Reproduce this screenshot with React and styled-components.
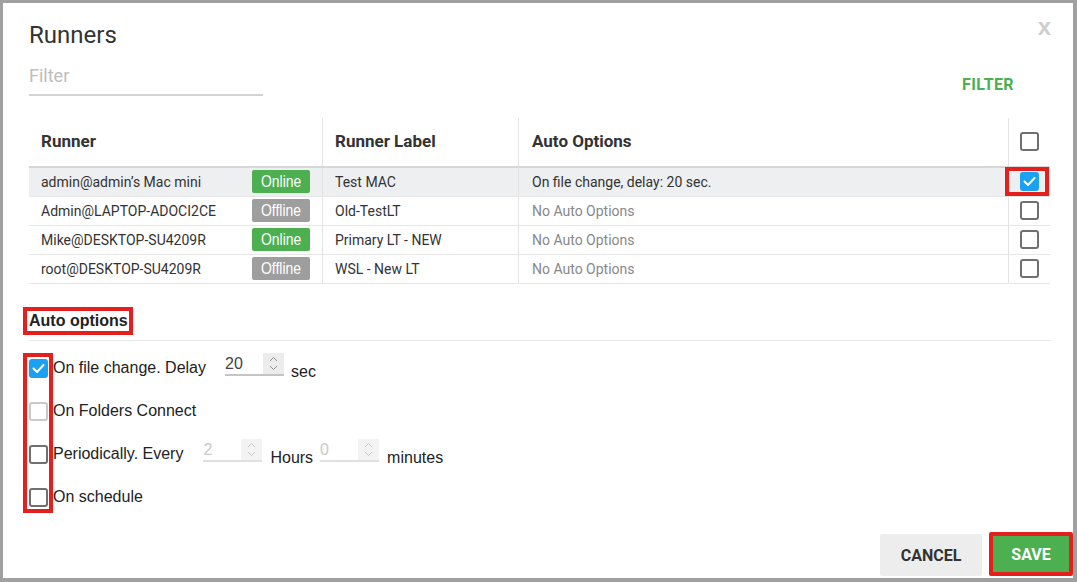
import React from 'react';
import styled, { createGlobalStyle } from 'styled-components';

const GlobalStyle = createGlobalStyle`
  html, body {
    margin: 0;
    padding: 0;
    background: #a0a0a0;
  }
  body {
    font-family: Roboto, "Liberation Sans", sans-serif;
  }
  * {
    box-sizing: border-box;
  }
`;

const RED = '#e3201e';

const Dialog = styled.div`
  width: 1070px;
  height: 575px;
  margin: 3px 4px 4px 3px;
  padding: 18px 22px 2px 26px;
  background: #fff;
  display: flex;
  flex-direction: column;
`;

const TitleRow = styled.div`
  display: flex;
  justify-content: space-between;
  align-items: flex-start;
`;

const Title = styled.h1`
  margin: 0;
  font-size: 24px;
  line-height: 28px;
  font-weight: 400;
  color: #333;
`;

const Close = styled.span`
  margin: -5px 0 0 0;
  font: bold 24px/22px "Liberation Sans", sans-serif;
  color: #cfcfcf;
  cursor: pointer;
`;

const FilterRow = styled.div`
  margin-top: 13px;
  display: flex;
  justify-content: space-between;
  align-items: flex-start;
`;

const FilterInput = styled.input`
  width: 234px;
  height: 34px;
  padding: 0 0 6px;
  border: 0;
  border-bottom: 2px solid #d3d3d3;
  font: 18px Roboto, sans-serif;
  color: #333;
  outline: none;
  &::placeholder {
    color: #bdbdbd;
  }
`;

const FilterButton = styled.button`
  margin: 5px 21px 0 0;
  height: 36px;
  padding: 0 16px;
  border: 0;
  background: none;
  color: #4caf50;
  font: 700 16px/36px Roboto, sans-serif;
  letter-spacing: 0.4px;
  cursor: pointer;
`;

const Table = styled.div`
  margin-top: 15px;
  width: 1021px;
`;

const Row = styled.div`
  display: grid;
  grid-template-columns: 293px 196px 490px 42px;
  height: ${p => (p.$head ? '50px' : '29px')};
  border-bottom: ${p => (p.$head ? '2px solid #d6d6d6' : '1px solid #e7e7e7')};
  background: ${p => (p.$active ? '#eeeff1' : 'transparent')};
`;

const Cell = styled.div`
  position: relative;
  display: flex;
  align-items: center;
  justify-content: ${p => p.$align || 'flex-start'};
  padding: ${p => (p.$check ? '0' : '0 12px 0 ' + (p.$pad || 12) + 'px')};
  padding-bottom: ${p => (p.$head ? '3px' : '1px')};
  border-left: ${p => (p.$first ? 'none' : '1px solid #e3e3e3')};
  font-size: ${p => (p.$head ? '17px' : '14px')};
  font-weight: ${p => (p.$head ? 700 : 400)};
  color: ${p => (p.$muted ? '#888' : '#333')};
  white-space: nowrap;
`;

const Badge = styled.span`
  width: 58px;
  height: 23px;
  border-radius: 2px;
  display: flex;
  align-items: center;
  justify-content: center;
  background: ${p => (p.$online ? '#4caf50' : '#9e9e9e')};
  color: #fff;
  font: 16px "Liberation Sans", sans-serif;
`;

const BadgeText = styled.span`
  display: inline-block;
  transform: scaleX(0.87);
`;

const RedFrame = styled.span`
  position: absolute;
  left: -4px;
  top: -1px;
  width: 44px;
  height: 29px;
  border: 4px solid ${RED};
  pointer-events: none;
`;

const Box = styled.span`
  width: 19px;
  height: 19px;
  flex: none;
  border-radius: 3px;
  border: 2px solid ${p => (p.$checked ? '#1ba1f2' : p.$light ? '#c9c9c9' : '#707070')};
  background: ${p => (p.$checked ? '#1ba1f2' : '#fff')};
  display: flex;
  align-items: center;
  justify-content: center;
`;

const Checkbox = ({ checked, light }) => (
  <Box $checked={checked} $light={light}>
    {checked && (
      <svg width="15" height="15" viewBox="0 0 15 15">
        <path d="M2.5 7.5 L6 11 L12.5 4" fill="none" stroke="#fff" strokeWidth="2" strokeLinecap="round" strokeLinejoin="round" />
      </svg>
    )}
  </Box>
);

const SectionTitle = styled.div`
  align-self: flex-start;
  margin: 23px 0 0 -6px;
  padding: 0 1px 0 2px;
  border: 4px solid ${RED};
  font: bold 16px/20px "Liberation Sans", sans-serif;
  color: #222;
`;

const Divider = styled.div`
  margin-top: 5px;
  height: 1px;
  background: #e8e8e8;
`;

const Options = styled.div`
  margin-top: 12px;
  display: flex;
`;

const CheckStack = styled.div`
  margin-left: -6px;
  padding: 2px 1px 2px 2px;
  border: 4px solid ${RED};
  display: flex;
  flex-direction: column;
  gap: 24px;
`;

const LabelStack = styled.div`
  padding-top: 6px;
  display: flex;
  flex-direction: column;
  gap: 24px;
`;

const OptionRow = styled.div`
  height: 19px;
  display: flex;
  align-items: center;
  white-space: nowrap;
  font: 16px/17px "Liberation Sans", sans-serif;
  color: #222;
  padding-bottom: 2px;
`;

const Unit = styled.span`
  margin: 8px 0 0 ${p => p.$gap || 7}px;
`;

const NumField = styled.div`
  width: 59px;
  height: 23px;
  margin: 0 0 6px ${p => p.$gap || 0}px;
  display: flex;
  border-bottom: 2px solid ${p => (p.$disabled ? '#e0e0e0' : '#c4c4c4')};
`;

const NumValue = styled.span`
  flex: 1;
  font: 16px/21px "Liberation Sans", sans-serif;
  color: ${p => (p.$disabled ? '#c8c8c8' : '#444')};
`;

const Spinner = styled.span`
  width: 21px;
  height: 21px;
  background: ${p => (p.$disabled ? '#f3f3f3' : '#ececec')};
  display: flex;
`;

const NumberInput = ({ value, disabled, gap }) => (
  <NumField $disabled={disabled} $gap={gap}>
    <NumValue $disabled={disabled}>{value}</NumValue>
    <Spinner $disabled={disabled}>
      <svg width="21" height="21" viewBox="0 0 21 21">
        <path d="M7 8 L10.5 4.5 L14 8 M7 13 L10.5 16.5 L14 13" fill="none" stroke={disabled ? '#c6c6c6' : '#8f8f8f'} strokeWidth="1" />
      </svg>
    </Spinner>
  </NumField>
);

const Footer = styled.div`
  margin: auto -22px 0 0;
  display: flex;
  justify-content: flex-end;
  align-items: flex-end;
  gap: 7px;
`;

const Button = styled.button`
  width: ${p => (p.$primary ? '84px' : '102px')};
  height: ${p => (p.$primary ? '44px' : '42px')};
  padding: 0;
  border: ${p => (p.$primary ? `4px solid ${RED}` : '0')};
  border-radius: 2px;
  background: ${p => (p.$primary ? '#4caf50' : '#ededed')};
  color: ${p => (p.$primary ? '#fff' : '#333')};
  font: 700 16px Roboto, sans-serif;
  cursor: pointer;
`;

const runners = [
  { name: 'admin@admin’s Mac mini', online: true, label: 'Test MAC', auto: 'On file change, delay: 20 sec.', checked: true },
  { name: 'Admin@LAPTOP-ADOCI2CE', online: false, label: 'Old-TestLT', auto: null },
  { name: 'Mike@DESKTOP-SU4209R', online: true, label: 'Primary LT - NEW', auto: null },
  { name: 'root@DESKTOP-SU4209R', online: false, label: 'WSL - New LT', auto: null },
];

export default function App() {
  return (
    <>
      <GlobalStyle />
      <Dialog>
        <TitleRow>
          <Title>Runners</Title>
          <Close>x</Close>
        </TitleRow>

        <FilterRow>
          <FilterInput placeholder="Filter" />
          <FilterButton>FILTER</FilterButton>
        </FilterRow>

        <Table>
          <Row $head>
            <Cell $head $first>Runner</Cell>
            <Cell $head $pad={12}>Runner Label</Cell>
            <Cell $head $pad={13}>Auto Options</Cell>
            <Cell $check $align="center"><Checkbox /></Cell>
          </Row>
          {runners.map(r => (
            <Row key={r.name} $active={r.checked}>
              <Cell $first $align="space-between">
                {r.name}
                <Badge $online={r.online}>
                  <BadgeText>{r.online ? 'Online' : 'Offline'}</BadgeText>
                </Badge>
              </Cell>
              <Cell $pad={12}>{r.label}</Cell>
              <Cell $pad={13} $muted={!r.auto}>{r.auto || 'No Auto Options'}</Cell>
              <Cell $check $align="center">
                <Checkbox checked={r.checked} />
                {r.checked && <RedFrame />}
              </Cell>
            </Row>
          ))}
        </Table>

        <SectionTitle>Auto options</SectionTitle>
        <Divider />

        <Options>
          <CheckStack>
            <Checkbox checked />
            <Checkbox light />
            <Checkbox />
            <Checkbox />
          </CheckStack>
          <LabelStack>
            <OptionRow>
              On file change. Delay
              <NumberInput value="20" gap={19} />
              <Unit>sec</Unit>
            </OptionRow>
            <OptionRow>On Folders Connect</OptionRow>
            <OptionRow>
              Periodically. Every
              <NumberInput value="2" disabled gap={20} />
              <Unit $gap={8}>Hours</Unit>
              <NumberInput value="0" disabled gap={7} />
              <Unit $gap={8}>minutes</Unit>
            </OptionRow>
            <OptionRow>On schedule</OptionRow>
          </LabelStack>
        </Options>

        <Footer>
          <Button>CANCEL</Button>
          <Button $primary>SAVE</Button>
        </Footer>
      </Dialog>
    </>
  );
}
